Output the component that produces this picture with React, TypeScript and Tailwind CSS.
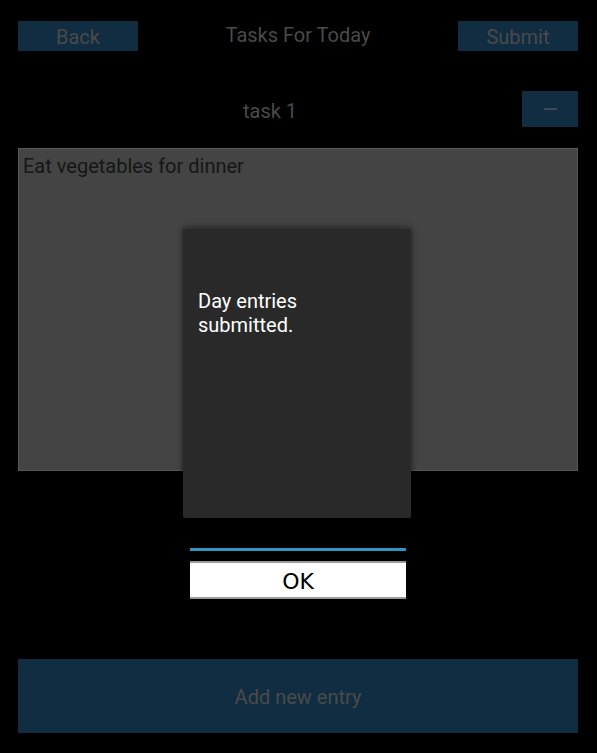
const App = () => {
  return (
    <div className="relative w-[597px] h-[753px] bg-black overflow-hidden font-['Roboto',sans-serif]">
      <div className="flex items-start justify-between pl-[18px] pr-[19px] pt-[21px]">
        <button className="w-[120px] h-[30px] bg-[#112d42] text-[#4a4a4a] text-[20px] leading-[30px] pt-[2px] flex items-center justify-center">
          Back
        </button>
        <div className="text-[#4a4a4a] text-[20px] leading-[28px]">Tasks For Today</div>
        <button className="w-[120px] h-[30px] bg-[#112d42] text-[#4a4a4a] text-[20px] leading-[30px] pt-[2px] flex items-center justify-center">
          Submit
        </button>
      </div>

      <div className="flex items-center pl-[18px] pr-[19px] mt-[40px] h-[36px]">
        <div className="flex-1 text-center text-[#4a4a4a] text-[20px] pt-[3px]">task 1</div>
        <button className="w-[56px] h-[36px] bg-[#112d42] flex items-center justify-center">
          <span className="block w-[13px] h-[2px] bg-[#3d4b57]" />
        </button>
      </div>

      <div className="ml-[18px] mr-[19px] mt-[21px] h-[323px] bg-[#444444] border border-[#575757] px-[4px] pt-[3px]">
        <div className="text-[#161616] text-[20px] leading-[28px]">Eat vegetables for dinner</div>
      </div>

      <div className="ml-[18px] mr-[19px] mt-[188px] h-[74px] bg-[#112d42] flex items-center justify-center pt-[2px] text-[#4a4a4a] text-[20px]">
        Add new entry
      </div>

      {/* dialog overlay */}
      <div className="absolute left-[183px] top-[228px] w-[228px] flex flex-col">
        <div className="w-[228px] h-[290px] bg-[#292929] border-t border-[#333333] rounded-[2px] shadow-[0_0_6px_rgba(0,0,0,0.6)] px-[15px] pt-[60px]">
          <p className="text-white text-[20px] leading-[24px] w-[140px]">Day entries submitted.</p>
        </div>
        <div className="ml-[7px] w-[216px] h-[3px] bg-[#3393c4] mt-[30px]" />
        <button className="ml-[7px] w-[216px] h-[38px] mt-[10px] bg-white border-y-2 border-[#9a9a9a] text-black text-[22px] pt-[2px] font-['DejaVu_Sans',sans-serif] flex items-center justify-center">
          OK
        </button>
      </div>
    </div>
  );
};

export default App;
